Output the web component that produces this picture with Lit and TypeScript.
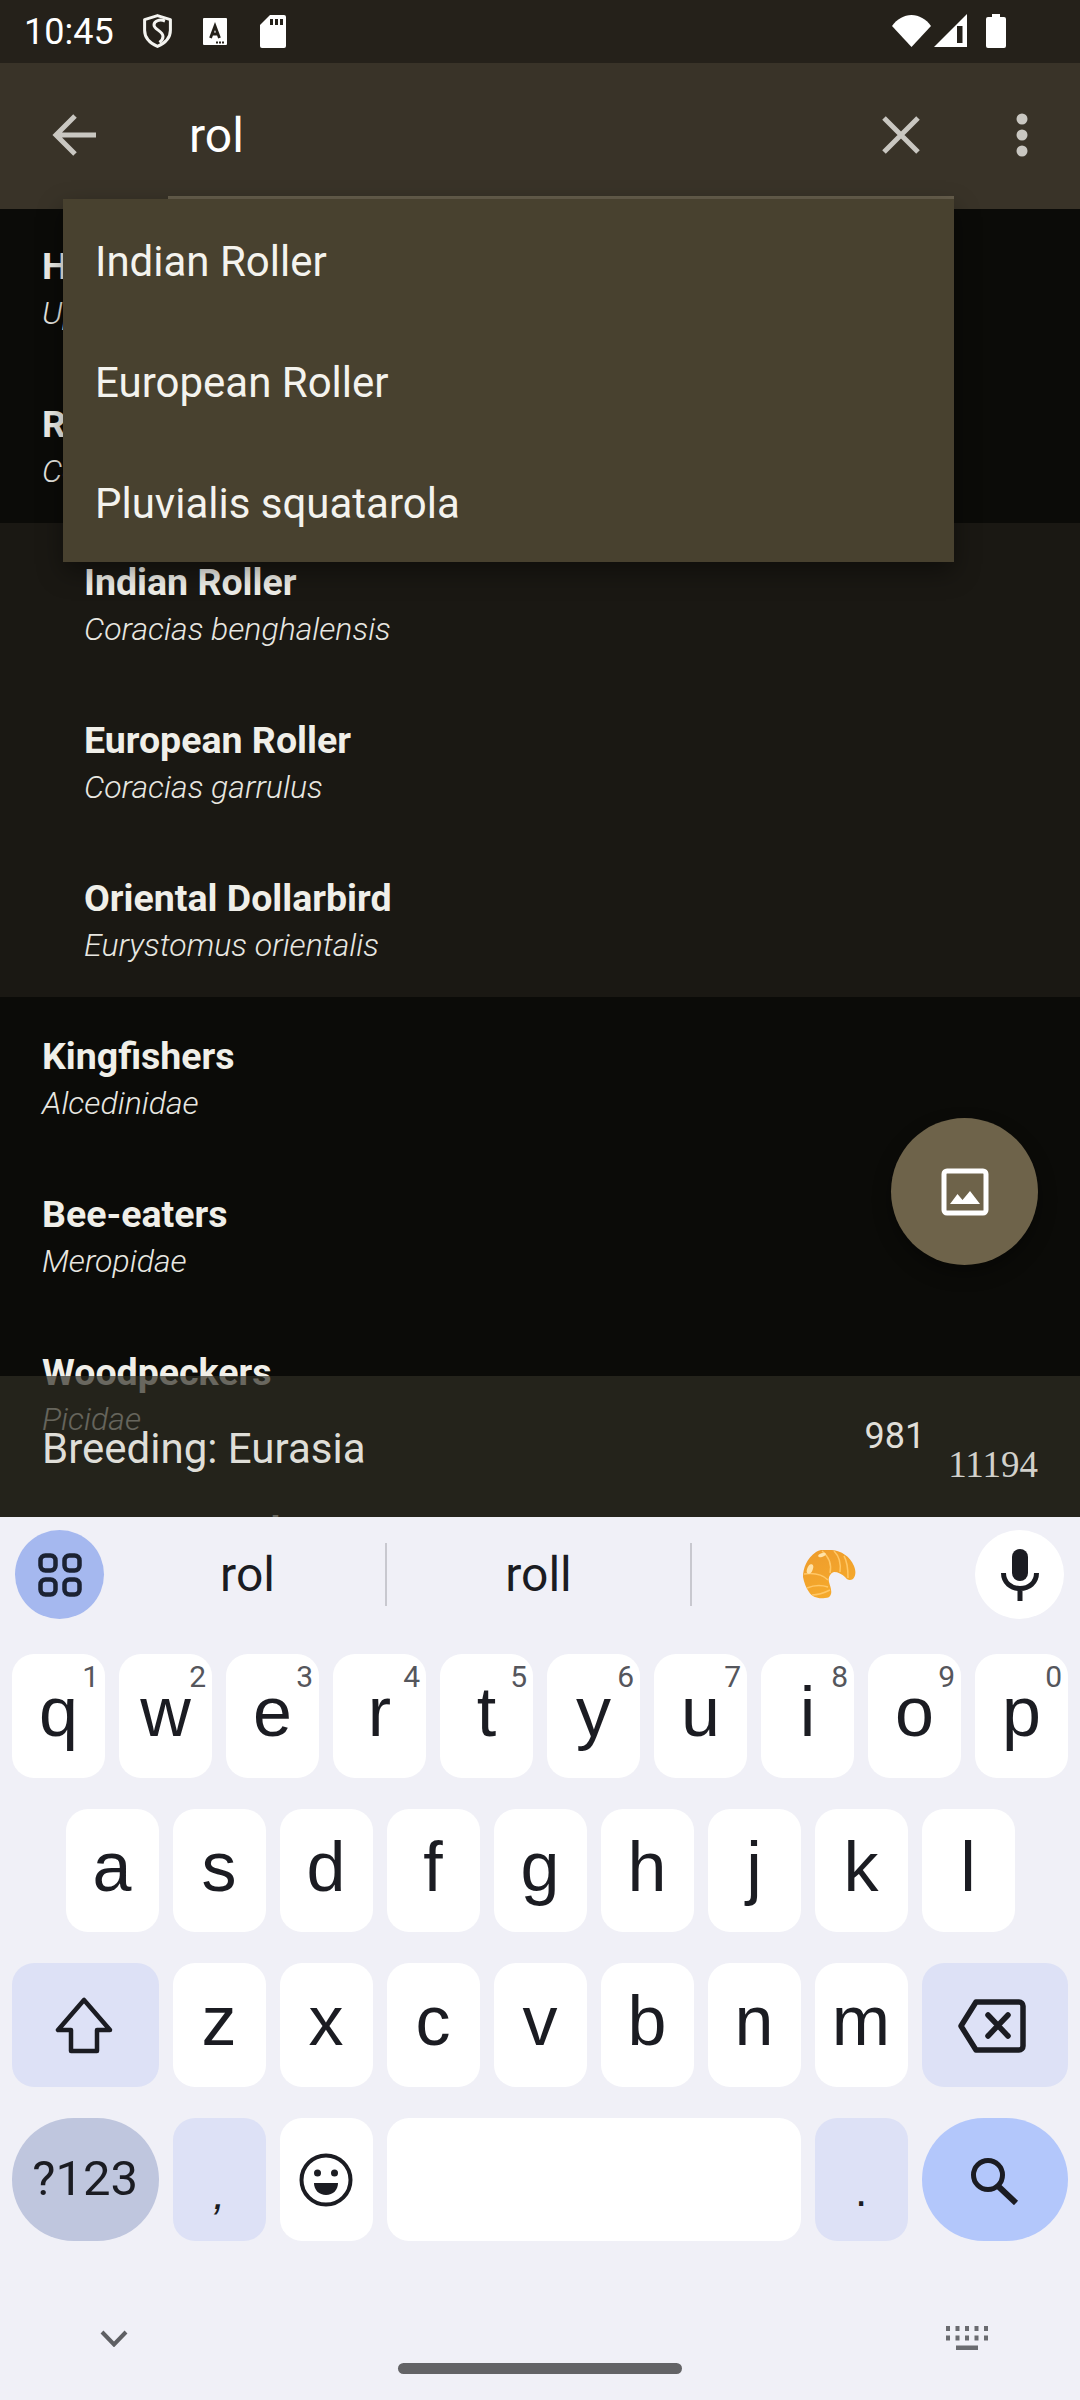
import { LitElement, html, css, svg } from "lit";
import { customElement } from "lit/decorators.js";

const row1 = ["q","w","e","r","t","y","u","i","o","p"];
const hints = ["1","2","3","4","5","6","7","8","9","0"];
const row2 = ["a","s","d","f","g","h","j","k","l"];
const row3 = ["z","x","c","v","b","n","m"];

const topRows = [["Hoopoes","Upupidae"],["Rollers","Coraciidae"]];
const subRows = [["Indian Roller","Coracias benghalensis"],["European Roller","Coracias garrulus"],["Oriental Dollarbird","Eurystomus orientalis"]];
const lowRows = [["Kingfishers","Alcedinidae"],["Bee-eaters","Meropidae"],["Woodpeckers","Picidae"],["Caracaras, Falcons","Falconidae"]];

const icons = {
  shield: svg`<svg width="29" height="34" viewBox="0 0 29 34" fill="none" stroke="#f4f4f0" stroke-width="3"><path d="M14.5 1.6 27.4 5.6v10.6c0 7.4-5.4 12.9-12.9 16.2C7 29.1 1.6 23.6 1.6 16.2V5.6z" stroke-linejoin="round"/><path d="M22 7c-5-2-11-.5-11 4 0 4.500 9 6 9 11.500 0 2.500-1.500 4.500-3.500 6" stroke-width="3"/></svg>`,
  sim: svg`<svg width="24" height="27" viewBox="0 0 24 27"><path fill="#fff" d="M1 0h22a1 1 0 0 1 1 1v25a1 1 0 0 1-1 1H1a1 1 0 0 1-1-1V1a1 1 0 0 1 1-1z"/><path fill="none" stroke="#25211a" stroke-width="2.800" d="M7.500 20 12 8l4.500 12M9 16h6"/><path stroke="#25211a" stroke-width="2" stroke-dasharray="2 1" d="M13 24.500h8"/></svg>`,
  sd: svg`<svg width="26" height="33" viewBox="0 0 26 33"><path fill="#fff" d="M10 0h14a2 2 0 0 1 2 2v29a2 2 0 0 1-2 2H2a2 2 0 0 1-2-2V10z"/><path fill="#25211a" d="M10 4h3v6h-3zM15 4h3v6h-3zM20 4h3v6h-3z"/></svg>`,
  wifi: svg`<svg width="39" height="33" viewBox="0 0 39 33"><path fill="#fff" d="M0 12C5 5 12 1 19.500 1S34 5 39 12L19.500 33z"/></svg>`,
  signal: svg`<svg width="33" height="33" viewBox="0 0 33 33"><path fill="#fff" d="M33 0v33H0z"/><path fill="#25211a" d="M23 12h5.500v17H23z"/></svg>`,
  battery: svg`<svg width="20" height="34" viewBox="0 0 20 34"><path fill="#fff" d="M6 0h8v3h4a2 2 0 0 1 2 2v27a2 2 0 0 1-2 2H2a2 2 0 0 1-2-2V5a2 2 0 0 1 2-2h4z"/></svg>`,
  back: svg`<svg width="44" height="42" viewBox="0 0 44 42" fill="none" stroke="#c9c7c1" stroke-width="5"><path d="M44 21H5M23 2 4 21l19 19"/></svg>`,
  clear: svg`<svg width="38" height="38" viewBox="0 0 38 38" fill="none" stroke="#c9c7c1" stroke-width="5"><path d="M2 2l34 34M36 2 2 36"/></svg>`,
  dots: svg`<svg width="12" height="44" viewBox="0 0 12 44" fill="#c9c7c1"><circle cx="6" cy="6" r="5.500"/><circle cx="6" cy="22" r="5.500"/><circle cx="6" cy="38" r="5.500"/></svg>`,
  image: svg`<svg width="48" height="48" viewBox="0 0 48 48"><rect x="3" y="3" width="42" height="42" rx="3" fill="none" stroke="#fff" stroke-width="5"/><path fill="#fff" d="M9 36l7.500-10 5 6L29 23l10 13z"/></svg>`,
  apps: svg`<svg width="44" height="44" viewBox="0 0 44 44" fill="none" stroke="#1b2233" stroke-width="4.500"><rect x="2.500" y="2.500" width="15" height="15" rx="5"/><rect x="26.500" y="2.500" width="15" height="15" rx="5"/><rect x="2.500" y="26.500" width="15" height="15" rx="5"/><rect x="26.500" y="26.500" width="15" height="15" rx="5"/></svg>`,
  mic: svg`<svg width="38" height="52" viewBox="0 0 38 52" fill="none"><rect x="11" y="0" width="16" height="32" rx="8" fill="#1b1c22"/><path d="M2.500 24c0 9.500 7.500 15.500 16.500 15.500S35.500 33.500 35.500 24M19 39v13" stroke="#1b1c22" stroke-width="5"/></svg>`,
  shift: svg`<svg class="i-shift" width="60" height="58" viewBox="0 0 60 58" fill="none" stroke="#1b1c22" stroke-width="4.500" stroke-linejoin="round"><path d="M30 3 4 33h13v21h26V33h13z"/></svg>`,
  del: svg`<svg class="i-del" width="68" height="54" viewBox="0 0 68 54" fill="none" stroke="#1b1c22" stroke-width="5.500" stroke-linejoin="round" stroke-linecap="round"><path d="M18 3h43a4 4 0 0 1 4 4v40a4 4 0 0 1-4 4H18L3 27z"/><path d="M30 16l20 21M50 16 30 37"/></svg>`,
  emoji: svg`<svg class="i-emoji" width="54" height="54" viewBox="0 0 54 54"><circle cx="27" cy="27" r="24.500" fill="none" stroke="#1b1c22" stroke-width="4"/><circle cx="18.500" cy="20" r="3.500" fill="#1b1c22"/><circle cx="35.500" cy="20" r="3.500" fill="#1b1c22"/><path fill="#1b1c22" d="M15 30h24c0 7-5 12-12 12s-12-5-12-12z"/></svg>`,
  search: svg`<svg class="i-search" width="50" height="48" viewBox="0 0 50 48" fill="none" stroke="#1b1c22" stroke-width="5"><circle cx="18" cy="18" r="14.500"/><path d="M28 29l18 17" stroke-width="6"/></svg>`,
  chevron: svg`<svg width="28" height="17" viewBox="0 0 28 17" fill="none" stroke="#5f6064" stroke-width="4"><path d="M2 2l12 12.500L26 2"/></svg>`,
  keyboard: svg`<svg width="42" height="24" viewBox="0 0 42 24" fill="#6a6b70"><path d="M0 0h4v5H0zM9.500 0h4v5h-4zM19 0h4v5h-4zM28.500 0h4v5h-4zM38 0h4v5h-4zM0 9.500h4v5H0zM9.500 9.500h4v5h-4zM19 9.500h4v5h-4zM28.500 9.500h4v5h-4zM38 9.500h4v5h-4zM10 19.500h22V24H10z"/></svg>`,
  croissant: svg`<svg width="53" height="49" viewBox="0 0 53 49"><defs><linearGradient id="cg" x1="0.2" y1="0" x2="0.6" y2="1"><stop offset="0" stop-color="#ee9c2c"/><stop offset="1" stop-color="#f6ab2c"/></linearGradient></defs><path fill="url(#cg)" d="M22 48C15 49 9 47 6 42 3 38 1 32 0 27 0 18 4 8 13 2c5-3 11-3 16-2 9 1 18 6 22 16 2 5 2 10-1 13-3 2-6 1-8-2-3-3-7-5-11-5-4 1-6 6-5 10 1 4 3 8 2 12-1 3-3 4-6 4z"/><g fill="none" stroke="#ffc766" stroke-width="1.500"><path d="M19 1c6 5 10 13 8 22M31 1c5 5 7 13 6 21M41 6c3 5 4 13 4 22M1 24c8-1 18 0 24 6M4 38c7-3 15-3 21-1M9 45c6 0 12-2 18-5"/></g><ellipse cx="7" cy="19" rx="2.800" ry="5" fill="#ffe2a8" transform="rotate(22 7 19)"/><ellipse cx="19" cy="5" rx="4" ry="1.800" fill="#ffe2a8" transform="rotate(-20 19 5)"/></svg>`,
};

@customElement("app-root")
export class AppRoot extends LitElement {
  static styles = css`
    :host { display: block; width: 1080px; height: 2400px; overflow: hidden; font-family: Roboto, "Noto Sans", sans-serif; }
    .page { position: relative; width: 1080px; height: 2400px; display: flex; flex-direction: column; background: #0b0b08; overflow: hidden; }

    .status { height: 63px; flex: none; background: #25211a; display: flex; align-items: flex-start; color: #fff; position: relative; z-index: 2; box-sizing: border-box; padding: 14px 74px 0 24px; }
    .time { font-size: 36px; line-height: 36px; width: 119px; }
    .st-left { display: flex; gap: 31px; align-items: flex-start; }
    .st-left svg:nth-child(2) { margin-top: 4px; }
    .st-left svg:nth-child(3) { margin-top: 1px; margin-left: 2px; }
    .spacer { flex: 1; }
    .st-right { display: flex; align-items: flex-start; }
    .st-right svg:nth-child(1) { margin-right: 3px; }
    .st-right svg:nth-child(2) { margin-right: 19px; }

    .toolbar { height: 146px; flex: none; background: #393328; display: flex; align-items: center; position: relative; z-index: 2; box-sizing: border-box; }
    .tb-back { display: flex; margin: -2px 0 0 52px; width: 137px; }
    .query { font-size: 48px; line-height: 52px; color: #fff; margin-top: 0; flex: 1; }
    .tb-clear { display: flex; margin: -3px 0 0; }
    .tb-dots { display: flex; margin: -2px 52px 0 96px; }
    .underline { position: absolute; left: 168px; width: 786px; top: 133px; height: 3px; background: #665e4c; }

    .main { position: relative; height: 1308px; flex: none; overflow: hidden; background: #0b0b08; }
    .list { margin-top: -2px; }
    .sub { background: #1a1813; }
    .row { height: 158px; box-sizing: border-box; padding: 36px 0 0 42px; }
    .sub .row { padding-left: 84px; }
    .title { font-size: 37.5px; line-height: 46px; font-weight: 700; color: #f0efe9; white-space: nowrap; }
    .latin { font-size: 32px; line-height: 48px; font-weight: 300; font-style: italic; color: #e8e7e1; white-space: nowrap; }

    .fab { position: absolute; left: 891px; top: 909px; width: 147px; height: 147px; border-radius: 50%; background: #6e634a; display: flex; align-items: center; justify-content: center; box-shadow: 0 8px 18px rgba(0,0,0,.35); }
    .info { position: absolute; left: 0; right: 0; bottom: 0; height: 141px; background: rgba(47,45,36,.7); box-sizing: border-box; padding: 0 42px; display: flex; }
    .info-main { flex: 1; font-size: 42px; line-height: 48px; color: #dfded8; margin-top: 49px; }
    .info-a { font-size: 36px; line-height: 40px; color: #e0dfd9; margin-top: 40px; margin-right: 23px; }
    .info-b { font-family: "Liberation Serif", serif; font-size: 37px; line-height: 40px; color: #d2d1cb; margin-top: 69px; }

    .dropdown { position: absolute; left: 63px; top: 199px; width: 891px; height: 363px; background: #48412f; z-index: 3; box-shadow: 0 10px 24px rgba(0,0,0,.4); display: flex; flex-direction: column; }
    .dd-item { height: 121px; box-sizing: border-box; padding: 3px 0 0 32px; display: flex; align-items: center; font-size: 42px; color: #f4f3ee; }

    .kb { flex: 1; background: #f0f0f7; position: relative; z-index: 1; color: #1b1c22; }
    .strip { height: 137px; box-sizing: border-box; padding: 13px 16px 0 15px; display: flex; align-items: flex-start; }
    .round { width: 89px; height: 89px; border-radius: 50%; display: flex; align-items: center; justify-content: center; flex: none; }
    .round.apps { background: #a5b8ef; }
    .round.mic { background: #fff; }
    .sugg { height: 63px; margin-top: 13px; display: flex; align-items: center; justify-content: center; font-size: 48px; flex: none; box-sizing: border-box; }
    .sugg.a { width: 283px; border-right: 2px solid #c8c8cf; padding-left: 6px; }
    .sugg.b { width: 305px; border-right: 2px solid #c8c8cf; }
    .sugg.c { width: 283px; padding-right: 8px; }
    .keys { display: flex; flex-direction: column; gap: 31px; padding: 0 12px; }
    .kr { display: flex; gap: 14px; height: 123.5px; }
    .kr.two { padding: 0 53.5px; }
    .key { position: relative; width: 93px; height: 123.5px; flex: none; border-radius: 22px; background: #fff; display: flex; align-items: center; justify-content: center; font-family: "Liberation Sans", Arial, sans-serif; font-size: 70px; line-height: 1; color: #1b1c22; padding-bottom: 7px; box-sizing: border-box; }
    .hint { position: absolute; top: 8px; right: 6px; font-family: Roboto, sans-serif; font-size: 30px; line-height: 30px; color: #55565c; }
    .key.wide { width: 146.5px; padding-bottom: 0; }
    .key.fn { background: #dde1f6; }
    .key.space { width: 414px; }
    .key.sym { background: #bfc6de; border-radius: 62px; font-size: 49px; font-family: Roboto, sans-serif; padding-bottom: 2px; }
    .key.go { background: #b3c7fb; border-radius: 62px; }
    .key.bare { padding-bottom: 0; }
    .key.punct { font-size: 44px; padding: 30px 0 0; }
    .key.comma { font-style: italic; }
    .key.dot { padding-top: 23px; }
    .i-shift { margin: 3px 2px 0 0; }
    .i-del { margin: 3px 6px 0 0; }
    .i-emoji { margin-top: 2px; }
    .i-search { margin-top: 4px; }
    .navrow { position: absolute; left: 100px; right: 92px; top: 809px; display: flex; justify-content: space-between; align-items: flex-start; }
    .nav-chev { margin-top: 4px; display: flex; }
    .nav-kb { display: flex; }
    .home { position: absolute; left: 398px; top: 846px; width: 284px; height: 11px; border-radius: 6px; background: #636366; }
  `;

  private row(r: string[]) {
    return html`<div class="row"><div class="title">${r[0]}</div><div class="latin">${r[1]}</div></div>`;
  }

  render() {
    return html`
      <div class="page">
        <div class="status">
          <div class="time">10:45</div>
          <div class="st-left">${icons.shield}${icons.sim}${icons.sd}</div>
          <div class="spacer"></div>
          <div class="st-right">${icons.wifi}${icons.signal}${icons.battery}</div>
        </div>
        <div class="toolbar">
          <div class="tb-back">${icons.back}</div>
          <div class="query">rol</div>
          <div class="tb-clear">${icons.clear}</div>
          <div class="tb-dots">${icons.dots}</div>
          <div class="underline"></div>
        </div>
        <div class="main">
          <div class="list">
            ${topRows.map((r) => this.row(r))}
            <div class="sub">${subRows.map((r) => this.row(r))}</div>
            ${lowRows.map((r) => this.row(r))}
          </div>
          <div class="fab">${icons.image}</div>
          <div class="info">
            <div class="info-main">Breeding: Eurasia</div>
            <div class="info-a">981</div>
            <div class="info-b">11194</div>
          </div>
        </div>
        <div class="dropdown">
          <div class="dd-item">Indian Roller</div>
          <div class="dd-item">European Roller</div>
          <div class="dd-item">Pluvialis squatarola</div>
        </div>
        <div class="kb">
          <div class="strip">
            <div class="round apps">${icons.apps}</div>
            <div class="sugg a">rol</div>
            <div class="sugg b">roll</div>
            <div class="sugg c">${icons.croissant}</div>
            <div class="round mic">${icons.mic}</div>
          </div>
          <div class="keys">
            <div class="kr">${row1.map((k, i) => html`<div class="key">${k}<span class="hint">${hints[i]}</span></div>`)}</div>
            <div class="kr two">${row2.map((k) => html`<div class="key">${k}</div>`)}</div>
            <div class="kr">
              <div class="key wide fn">${icons.shift}</div>
              ${row3.map((k) => html`<div class="key">${k}</div>`)}
              <div class="key wide fn">${icons.del}</div>
            </div>
            <div class="kr">
              <div class="key wide sym">?123</div>
              <div class="key fn punct comma">,</div>
              <div class="key bare">${icons.emoji}</div>
              <div class="key space"></div>
              <div class="key fn punct dot">.</div>
              <div class="key wide go">${icons.search}</div>
            </div>
          </div>
          <div class="navrow">
            <div class="nav-chev">${icons.chevron}</div>
            <div class="nav-kb">${icons.keyboard}</div>
          </div>
          <div class="home"></div>
        </div>
      </div>
    `;
  }
}
